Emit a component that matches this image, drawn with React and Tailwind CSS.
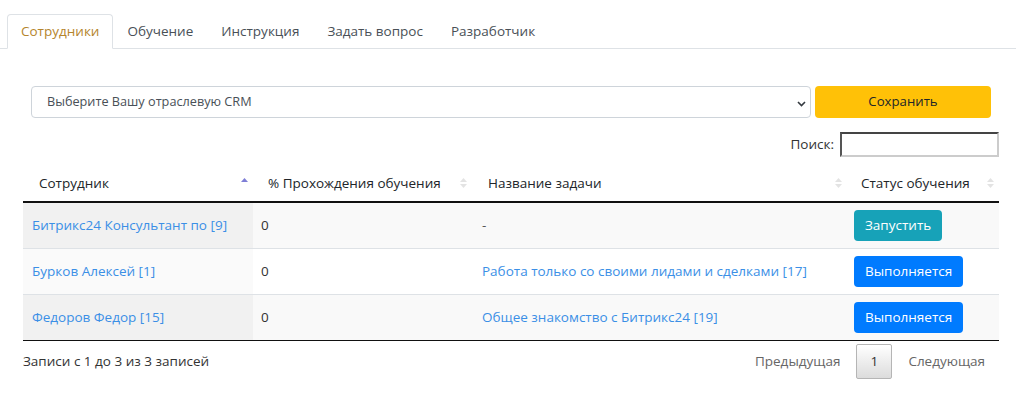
import React, { useState } from "react";

const tabs = ["Сотрудники", "Обучение", "Инструкция", "Задать вопрос", "Разработчик"];

const rows = [
  { name: "Битрикс24 Консультант по [9]", pct: "0", task: "-", status: "start" },
  { name: "Бурков Алексей [1]", pct: "0", task: "Работа только со своими лидами и сделками [17]", status: "run" },
  { name: "Федоров Федор [15]", pct: "0", task: "Общее знакомство с Битрикс24 [19]", status: "run" },
];

function SortIcon({ active }) {
  return (
    <svg width="7" height="12" viewBox="0 0 7 12" className="shrink-0">
      <polygon points="3.5,1 7,5 0,5" fill={active ? "#7e7ed6" : "#e3e3e3"} />
      {!active && <polygon points="0,7 7,7 3.5,11" fill="#e3e3e3" />}
    </svg>
  );
}

export default function App() {
  const [active, setActive] = useState(0);

  return (
    <main
      className="w-[1024px] h-[394px] bg-white text-[13.5px] text-[#212529] overflow-hidden"
      style={{ fontFamily: '"Open Sans", "DejaVu Sans", sans-serif' }}
    >
      {/* tabs */}
      <nav className="flex pl-[7px] pt-[14px] border-b border-[#dee2e6] w-[1016px]">
        {tabs.map((t, i) => (
          <button
            key={t}
            onClick={() => setActive(i)}
            className={`h-[35px] px-[13px] -mb-px rounded-t-[4px] border ${
              i === active
                ? "border-[#dee2e6] border-b-white bg-white text-[#b5852d]"
                : "border-transparent text-[#495057]"
            }`}
          >
            {t}
          </button>
        ))}
      </nav>

      {/* crm select */}
      <div className="flex gap-[4px] pl-[31px] mt-[37px]">
        <div className="relative w-[780px] h-[32px] border border-[#ced4da] rounded-[4px] flex items-center pl-[15px] text-[12.7px] text-[#495057]">
          Выберите Вашу отраслевую CRM
          <svg width="9" height="6" viewBox="0 0 9 6" className="absolute right-[4px] top-[14px]">
            <path d="M1 1 L4.5 4.5 L8 1" fill="none" stroke="#343a40" strokeWidth="1.6" />
          </svg>
        </div>
        <button className="w-[176px] h-[32px] bg-[#ffc107] rounded-[4px] text-[13.2px] text-[#212529]">
          Сохранить
        </button>
      </div>

      {/* search */}
      <div className="flex justify-end items-center gap-[6px] pr-[25px] mt-[14px] text-[#333]">
        <span>Поиск:</span>
        <input className="w-[159px] h-[25px] border-2 border-t-[#444] border-l-[#555] border-r-[#ccc] border-b-[#ccc] outline-none" />
      </div>

      {/* table */}
      <table className="ml-[23px] mt-[8px] w-[976px] table-fixed border-collapse">
        <colgroup>
          <col className="w-[230px]" />
          <col className="w-[220px]" />
          <col className="w-[375px]" />
          <col className="w-[151px]" />
        </colgroup>
        <thead>
          <tr className="h-[37px] border-b-2 border-[#111]">
            {[
              ["Сотрудник", true],
              ["% Прохождения обучения", false],
              ["Название задачи", false],
              ["Статус обучения", false],
            ].map(([h, a], i) => (
              <th key={h} className="font-medium text-left p-0">
                <div className={`flex items-center justify-between ${i === 3 ? "pl-[13px] pr-[5px]" : i === 0 ? "pl-[16px] pr-[5px]" : "pl-[15px] pr-[6px]"}`}>
                  <span>{h}</span>
                  <SortIcon active={a} />
                </div>
              </th>
            ))}
          </tr>
        </thead>
        <tbody>
          {rows.map((r, i) => (
            <tr
              key={r.name}
              className={`h-[46px] border-b ${i === rows.length - 1 ? "border-[#111]" : "border-[#dee2e6]"} ${i % 2 === 0 ? "bg-[#f9f9f9]" : "bg-white"}`}
            >
              <td className={`pl-[9px] ${i % 2 === 0 ? "bg-[#f1f1f1]" : "bg-[#fafafa]"}`}>
                <a className="text-[#3b8fe6]">{r.name}</a>
              </td>
              <td className="pl-[8px] text-[#333]">{r.pct}</td>
              <td className="pl-[9px]">
                {r.task === "-" ? (
                  <span className="text-[#555]">-</span>
                ) : (
                  <a className="text-[#3b8fe6]">{r.task}</a>
                )}
              </td>
              <td className="pl-[6px]">
                {r.status === "start" ? (
                  <button className="h-[31px] px-[11px] rounded-[4px] bg-[#17a2b8] text-white">Запустить</button>
                ) : (
                  <button className="h-[31px] px-[11px] rounded-[4px] bg-[#007bff] text-white">Выполняется</button>
                )}
              </td>
            </tr>
          ))}
        </tbody>
      </table>

      {/* footer */}
      <div className="flex items-center justify-between pl-[23px] pr-[39px] mt-[3px] text-[#333]">
        <span>Записи с 1 до 3 из 3 записей</span>
        <div className="flex items-center gap-[16px] text-[#666]">
          <span>Предыдущая</span>
          <span className="w-[36px] h-[35px] flex items-center justify-center border border-[#b5b5b5] rounded-[2px] bg-gradient-to-b from-white to-[#dcdcdc] text-[#333]">
            1
          </span>
          <span>Следующая</span>
        </div>
      </div>
    </main>
  );
}
